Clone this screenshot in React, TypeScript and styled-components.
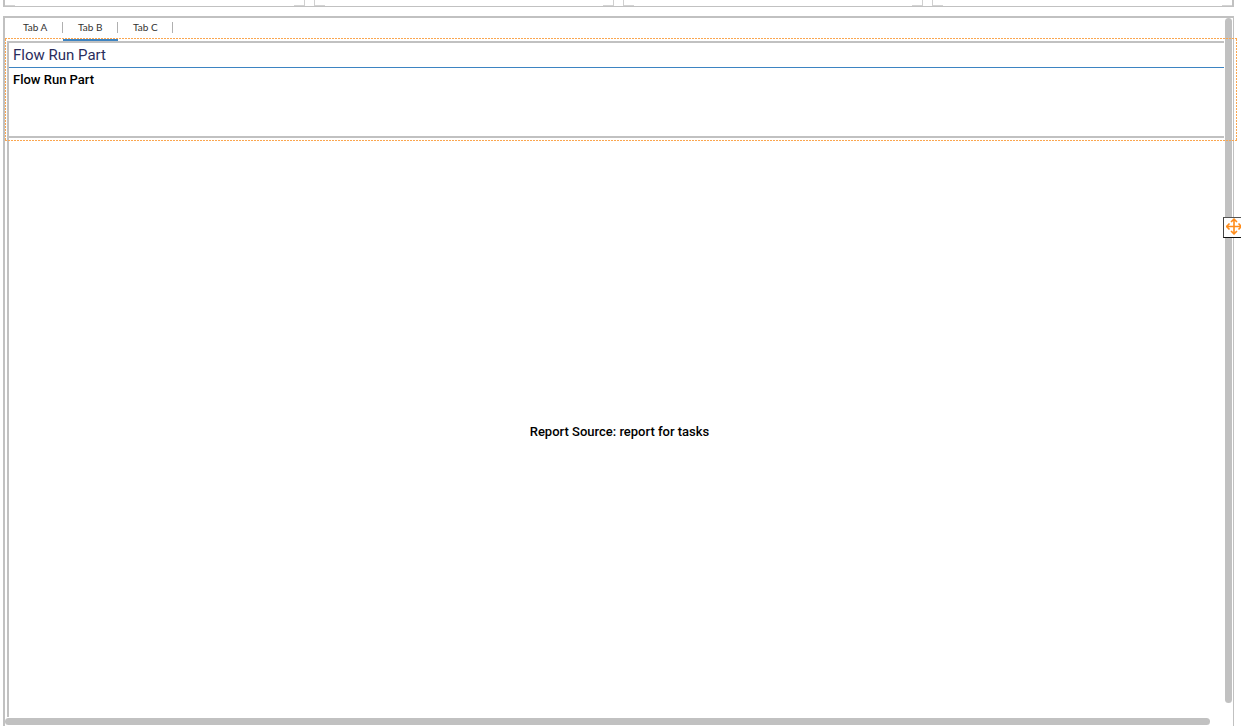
import React, { useState } from "react";
import styled, { createGlobalStyle } from "styled-components";

const line = "#c1c1c1";
const blue = "#3d84c2";
const orange = "#fba64f";

const GlobalStyle = createGlobalStyle`
  * { box-sizing: border-box; }
  body {
    margin: 0;
    background: #fff;
    color: #000;
    font-family: Roboto, "Liberation Sans", sans-serif;
    overflow: hidden;
  }
`;

const Page = styled.div`
  display: flex;
  flex-direction: column;
  gap: 9px;
  height: 100vh;
  padding: 0 7px 0 3px;
`;

const CardStrip = styled.section`
  display: grid;
  grid-template-columns: repeat(4, 1fr);
  column-gap: 9px;
  height: 7px;
  flex: none;
  border: solid ${line};
  border-width: 0 2px 1px 2px;
`;

const CardFoot = styled.div<{ $first?: boolean; $last?: boolean }>`
  display: flex;
  justify-content: space-between;
  border: solid #d0d0d0;
  border-width: 0 ${(p) => (p.$last ? 0 : 1)}px 0 ${(p) => (p.$first ? 0 : 1)}px;

  &::before,
  &::after {
    content: "";
    align-self: flex-end;
    width: 10px;
    height: 1px;
    background: #d4d4d4;
  }
`;

const Panel = styled.main`
  position: relative;
  display: grid;
  grid-template-columns: minmax(0, 1fr) 9px;
  grid-template-rows: minmax(0, 1fr) 9px;
  flex: 1;
  min-height: 0;
  border: solid ${line};
  border-width: 2px 1px 0 2px;
`;

const Content = styled.div`
  display: flex;
  flex-direction: column;
  min-height: 0;
  padding-left: 2px;
`;

const TabList = styled.div`
  display: flex;
  height: 23px;
  flex: none;
  padding-left: 1px;
`;

const Tab = styled.button<{ $active: boolean }>`
  display: flex;
  flex-direction: column;
  justify-content: space-between;
  width: 55px;
  padding: 4px 0 0;
  border: 0;
  background: none;
  font: 10px/10px Lato, "Liberation Sans", sans-serif;
  color: #333;
  cursor: pointer;

  &::after {
    content: "";
    width: 100%;
    height: 2px;
    background: ${(p) => (p.$active ? blue : "transparent")};
  }
`;

const TabLabel = styled.span`
  width: 100%;
  height: 11px;
  border-right: 1px solid #b0b0b0;
  padding-left: 15px;
  text-align: left;
`;

const Body = styled.div`
  display: flex;
  flex-direction: column;
  flex: 1;
  min-height: 0;
  border: solid ${line};
  border-width: 2px 0 0 2px;
`;

const FlowPart = styled.section`
  height: 95px;
  flex: none;
  border-bottom: 2px solid ${line};
`;

const PartTitle = styled.h2`
  margin: 0;
  padding: 0 4px;
  border-bottom: 1px solid ${blue};
  font-size: 15px;
  font-weight: 400;
  line-height: 24px;
  color: #2b2d5c;
`;

const PartText = styled.p`
  margin: 0;
  padding: 0 4px;
  font-size: 13px;
  font-weight: 500;
  line-height: 24px;
`;

const Report = styled.section`
  display: flex;
  flex: 1;
  align-items: center;
  justify-content: center;
  padding: 8px 0 0 6px;
  font-size: 13px;
  font-weight: 500;
  line-height: 18px;
`;

const VerticalTrack = styled.div`
  display: flex;
  padding: 0 1px 14px;
`;

const HorizontalTrack = styled.div`
  display: flex;
  padding: 1px 14px 1px 0;
`;

const Thumb = styled.div`
  flex: 1;
  border-radius: 4px;
  background: ${line};
`;

const Selection = styled.div`
  position: absolute;
  top: 20px;
  left: 0;
  right: -4px;
  height: 103px;
  pointer-events: none;
`;

const SelectionFrame = styled.svg`
  display: block;
  width: 100%;
  height: 100%;
`;

const MoveHandle = styled.button`
  position: absolute;
  top: 199px;
  right: -11px;
  display: flex;
  align-items: center;
  width: 21px;
  height: 21px;
  padding: 0 0 2px 2px;
  border: 1px solid #111;
  border-top-color: #555;
  border-left-color: #444;
  background: #fff;
  cursor: move;
`;

const MoveIcon = () => (
  <svg width="17" height="17" viewBox="0 0 17 17" fill="none" stroke="#ff8c1a" aria-hidden="true">
    <path d="M8 1v15M.5 8.5h15" strokeWidth="1.6" />
    <path
      d="M5 4 8 1.1 11 4M5 13l3 2.9 3-2.9M3.5 5.5.7 8.5l2.8 3M12.5 5.5l2.8 3-2.8 3"
      strokeWidth="1.6"
    />
  </svg>
);

const tabs = ["Tab A", "Tab B", "Tab C"];

export default function App() {
  const [active, setActive] = useState("Tab B");

  return (
    <>
      <GlobalStyle />
      <Page>
        <CardStrip>
          <CardFoot $first />
          <CardFoot />
          <CardFoot />
          <CardFoot $last />
        </CardStrip>
        <Panel>
          <Content>
            <TabList role="tablist">
              {tabs.map((name) => (
                <Tab
                  key={name}
                  role="tab"
                  aria-selected={name === active}
                  $active={name === active}
                  onClick={() => setActive(name)}
                >
                  <TabLabel>{name}</TabLabel>
                </Tab>
              ))}
            </TabList>
            <Body>
              <FlowPart>
                <PartTitle>Flow Run Part</PartTitle>
                <PartText>Flow Run Part</PartText>
              </FlowPart>
              <Report>Report Source: report for tasks</Report>
            </Body>
          </Content>
          <VerticalTrack>
            <Thumb />
          </VerticalTrack>
          <HorizontalTrack>
            <Thumb />
          </HorizontalTrack>
          <Selection>
            <SelectionFrame aria-hidden="true">
              <rect width="100%" height="100%" fill="none" stroke={orange} strokeWidth="2" strokeDasharray="2 1" />
            </SelectionFrame>
          </Selection>
          <MoveHandle aria-label="Move part">
            <MoveIcon />
          </MoveHandle>
        </Panel>
      </Page>
    </>
  );
}
